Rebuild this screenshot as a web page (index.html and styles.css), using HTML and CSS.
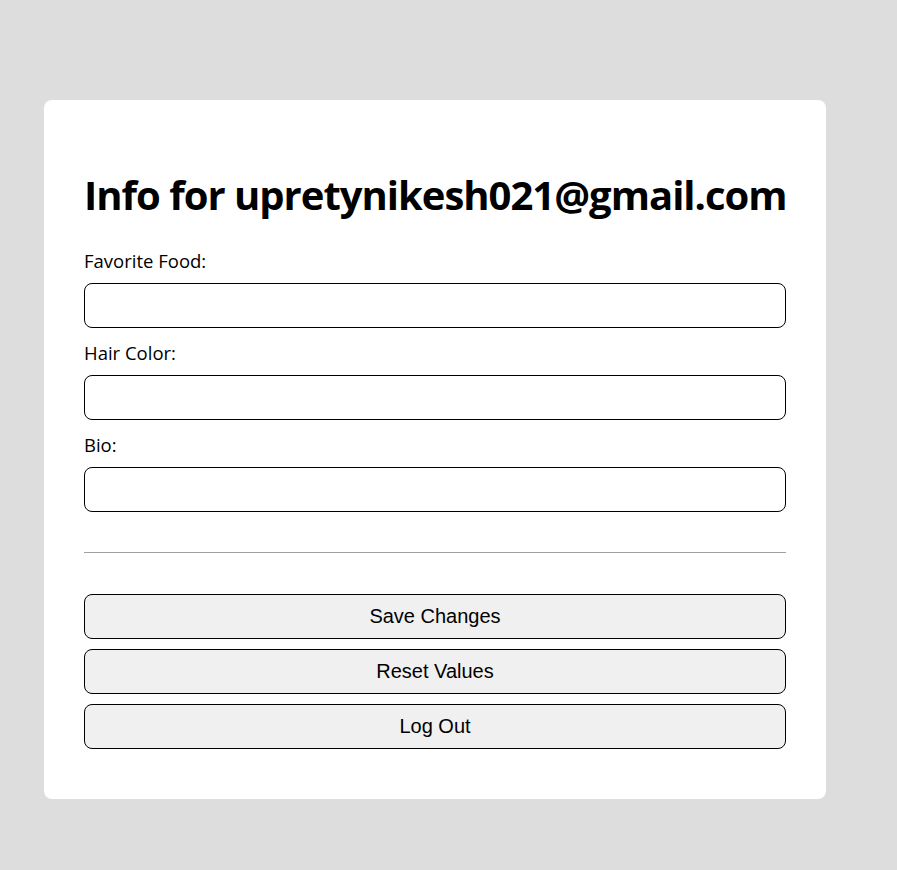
FILE: index.html
```html
<!DOCTYPE html>
<html>
<head>
<meta charset="utf-8">
<link rel="stylesheet" href="styles.css">
</head>
<body>
<div class="card">
  <h1 class="title">Info for upretynikesh021@gmail.com</h1>
  <div class="fields">
    <div class="field">
      <label class="label">Favorite Food:</label>
      <input class="input" type="text">
    </div>
    <div class="field">
      <label class="label">Hair Color:</label>
      <input class="input" type="text">
    </div>
    <div class="field">
      <label class="label">Bio:</label>
      <input class="input" type="text">
    </div>
  </div>
  <hr class="divider">
  <div class="actions">
    <button class="btn">Save Changes</button>
    <button class="btn">Reset Values</button>
    <button class="btn">Log Out</button>
  </div>
</div>
</body>
</html>
```
FILE: styles.css
```css
html, body {
  margin: 0;
  padding: 0;
  background: #dddddd;
}
body {
  font-family: "Open Sans", "Noto Sans", sans-serif;
  color: #000;
}
.card {
  box-sizing: border-box;
  width: 782px;
  margin: 100px 0 0 44px;
  padding: 40px 40px 50px 40px;
  background: #fff;
  border-radius: 8px;
}
.title {
  margin: 29px 0 28px 0;
  font-size: 40px;
  line-height: 52px;
  font-weight: 700;
  letter-spacing: -1px;
  white-space: nowrap;
}
.fields {
  display: flex;
  flex-direction: column;
  gap: 13px;
}
.field {
  display: flex;
  flex-direction: column;
  gap: 10px;
}
.label {
  font-size: 18.5px;
  line-height: 24px;
}
.input {
  box-sizing: border-box;
  width: 100%;
  height: 45px;
  margin: 0;
  border: 1px solid #000;
  border-radius: 8px;
  background: #fff;
  font-size: 16px;
  padding: 0 10px;
}
.divider {
  border: none;
  border-top: 1px solid #a0a0a0;
  margin: 40px 0 41px 0;
  height: 0;
}
.actions {
  display: flex;
  flex-direction: column;
  gap: 10px;
}
.btn {
  box-sizing: border-box;
  width: 100%;
  height: 45px;
  margin: 0;
  border: 1px solid #000;
  border-radius: 8px;
  background: #f0f0f0;
  color: #000;
  font-family: "Liberation Sans", Arial, sans-serif;
  font-size: 20px;
}
```
